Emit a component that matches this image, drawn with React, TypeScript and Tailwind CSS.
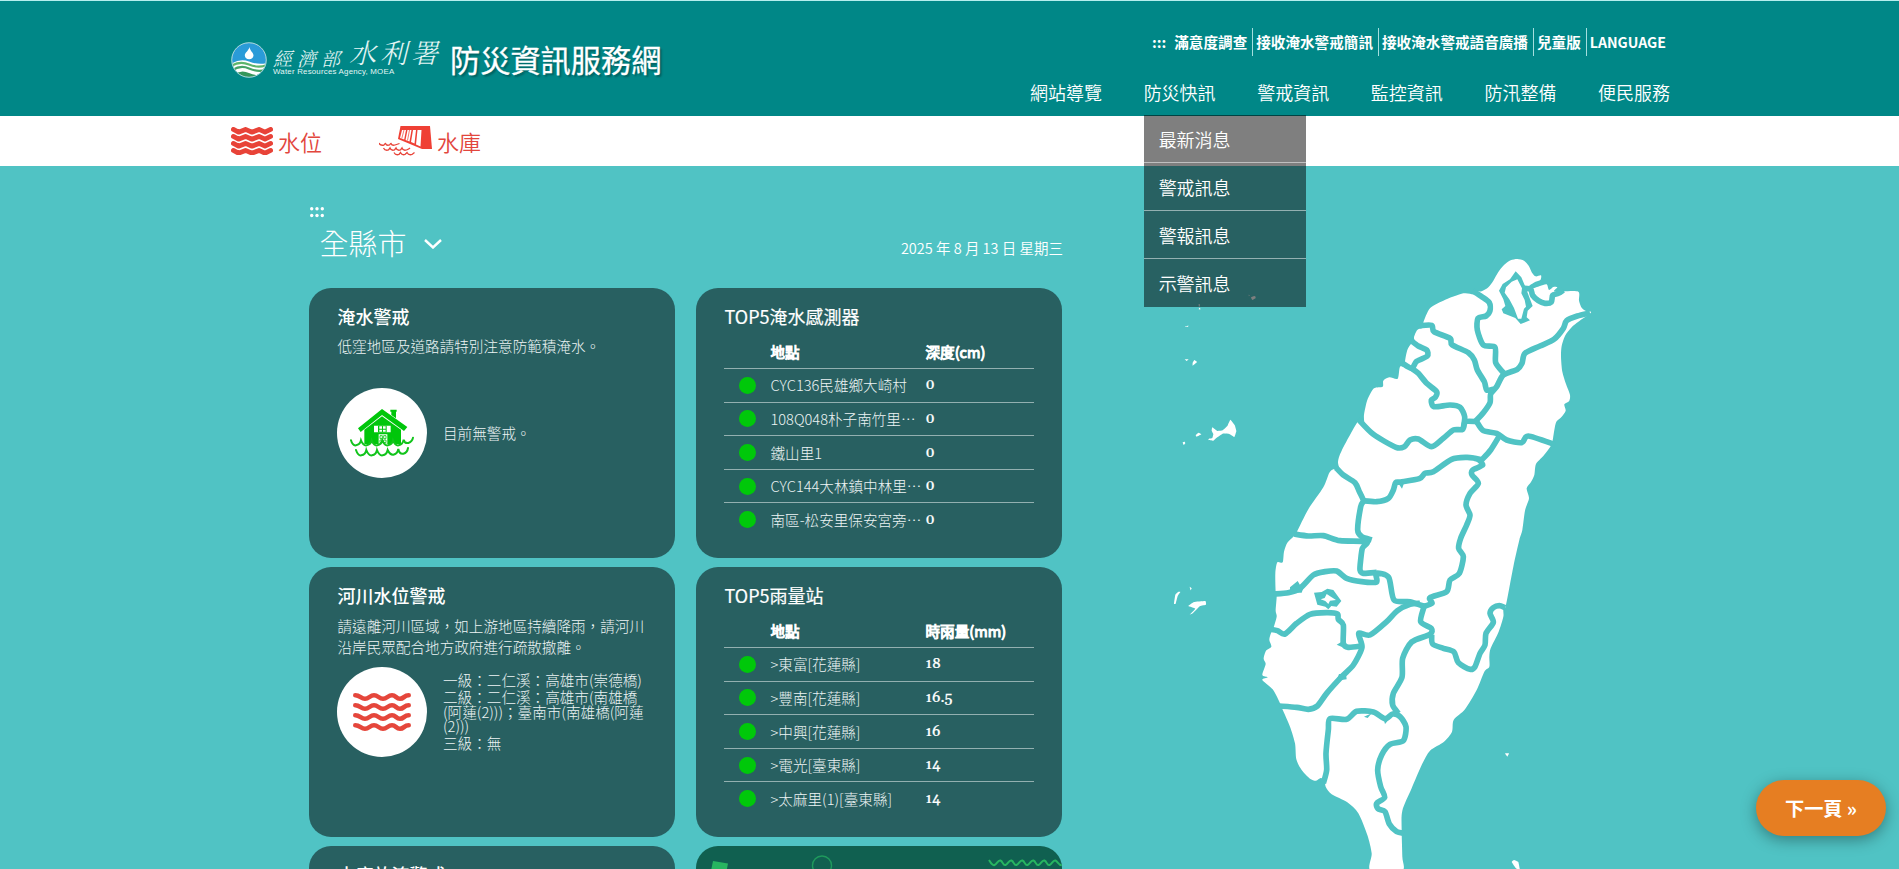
import React from 'react';

type Pt = [number, number];

const parse = (s: string): Pt[] => s.trim().split(/\s+/).map((p) => p.split(',').map(Number) as Pt);

/** Catmull-Rom spline through the given "x,y" points. */
function spline(src: string, closed = false, tension = 0.13): string {
  const p = parse(src);
  const n = p.length;
  const at = (i: number) => (closed ? p[(i + n) % n] : p[Math.max(0, Math.min(n - 1, i))]);
  let d = `M${p[0][0]},${p[0][1]}`;
  const last = closed ? n : n - 1;
  for (let i = 0; i < last; i++) {
    const [a, b, c, e] = [at(i - 1), at(i), at(i + 1), at(i + 2)];
    d += `C${b[0] + (c[0] - a[0]) * tension},${b[1] + (c[1] - a[1]) * tension} ${c[0] - (e[0] - b[0]) * tension},${c[1] - (e[1] - b[1]) * tension} ${c[0]},${c[1]}`;
  }
  return closed ? d + 'Z' : d;
}

const ISLAND =
  '735,155 755,154 775,142 790,122 805,96 822,75 842,61 862,57 882,62 896,77 906,98 917,109 933,106 931,120 915,126 895,140 905,146 930,138 950,133 957,150 970,141 982,142 972,154 1000,154 1045,155 1047,182 1055,203 1068,213 1083,215 1078,222 1055,238 1025,262 1005,288 995,318 993,350 997,395 1008,432 1020,465 1017,484 1003,493 1007,512 995,530 979,545 973,570 967,607 960,622 940,648 918,672 913,705 903,726 890,745 897,775 885,812 877,870 868,900 850,980 828,1095 820,1110 820,1130 806,1175 782,1225 778,1250 778,1280 763,1295 740,1350 705,1408 671,1440 666,1475 642,1505 600,1532 575,1575 545,1645 517,1712 515,1770 517,1850 516,1892 422,1892 425,1840 412,1785 385,1720 352,1687 305,1663 287,1640 284,1620 272,1614 258,1622 240,1616 215,1590 199,1558 195,1510 180,1460 157,1407 148,1385 128,1348 97,1320 113,1312 97,1305 107,1272 101,1256 108,1232 124,1220 118,1200 122,1182 130,1165 140,1130 137,1112 140,1070 137,1055 136,1000 142,967 158,967 162,935 172,908 190,890 200,877 235,808 280,742 298,698 312,687 328,688 324,665 335,632 385,543 402,552 402,525 412,480 432,445 458,440 460,422 478,412 503,416 510,380 527,382 525,365 532,330 543,312 555,308 552,292 562,270 582,262 580,248 600,205 640,182 700,160 730,163';

const BORDERS = [
  '728,153 755,170 778,188 780,212 768,228 744,235 742,270 760,315 795,322 797,368 820,398',
  '1080,219 1042,228 1010,242 1000,265 972,298 930,318 885,340 876,370 862,388 820,405 800,440 782,462 780,488 760,518 735,545',
  '570,257 605,256 612,275 660,295 666,314 715,338 733,360 742,390 763,425 770,450 790,448',
  '545,303 565,318 590,330 592,348 560,364 545,385 518,370',
  '545,385 565,400 590,430 620,455 616,472 604,480 612,500 660,495 690,502 704,530 700,565',
  '385,538 430,583 498,622 523,620 540,600 565,597 605,620 640,595 670,570 698,568 706,545 740,545',
  '740,545 760,572 800,580 830,600 875,608 895,588 975,614',
  '808,588 782,630 755,660',
  '758,660 735,655 710,652 665,658 610,695 585,700 568,716 512,726 497,728 490,750 475,775 440,785 395,782',
  '318,683 340,705 375,728 388,755 400,782 392,800 383,870 395,890 425,900',
  '192,882 235,888 280,887 330,902 410,905 397,925 392,960 390,990 400,1000 440,997',
  '745,658 758,675 728,690 726,705 745,730 720,760 708,795 720,825 710,855 692,895 686,925 700,950 688,1000 660,1020 650,1055 600,1073 606,1090 578,1100',
  '130,1062 175,1058 210,1045 250,1005 285,995 320,993 350,1015 395,1025 440,1026 438,1000 476,1012 492,1080 540,1085 585,1100',
  '122,1168 142,1172 165,1182 200,1150 240,1123 290,1118 322,1122 325,1138 340,1155 340,1210 355,1222 395,1218',
  '570,1090 540,1093 502,1112 470,1145 420,1185 386,1180 396,1222 370,1275 335,1310 290,1360 262,1398 235,1408 200,1402 148,1398',
  '582,1100 572,1145 604,1165 600,1183 545,1206 518,1255 516,1312 490,1360 488,1395 505,1420',
  '605,1185 608,1212 640,1225 672,1236 685,1268 720,1288 735,1280 750,1240 765,1215 768,1180 790,1147 780,1120 790,1103 808,1097 826,1103',
  '280,1630 290,1590 288,1540 295,1470 300,1436 350,1438 380,1414 430,1416 465,1436 488,1422 510,1430 528,1460 520,1502 480,1513 455,1545 443,1590 452,1640 464,1672 440,1690 444,1706 465,1715 478,1752 500,1775 522,1780',
  '880,145 902,148 908,166 925,182 945,190 964,186 968,166 985,160 1000,150',
];

const ISLETS = [
  '-92,203 -90,205 -88,208 -94,208',
  '-135,259 -124,257 -128,261',
  '-136,358 -124,358 -130,363',
  '-112,368 -107,360 -99,366 -112,377',
  '-53,562 -38,573 -22,571 -8,558 1,539 14,555 19,573 13,591 -2,582 -22,581 -40,593 -50,602 -65,600 -63,596 -53,594 -50,582 -55,572',
  '-103,585 -94,578 -86,583 -100,590',
  '-142,607 -136,605 -134,610 -139,615',
  '-168,1091 -164,1064 -156,1056 -149,1056 -157,1068 -163,1091',
  '-121,1040 -115,1045 -118,1051',
  '-125,1098 -108,1086 -74,1083 -72,1094 -90,1098 -112,1120 -121,1124 -104,1106',
  '56,164 59,166 57,169',
  '63,172 75,168 77,174 67,180',
  '-94,192 -90,194 -93,202',
  '825,1540 837,1540 832,1550',
  '845,1866 852,1860 865,1866 870,1892 858,1885',
];

function TaiwanMap() {
  return (
    <svg className="h-[629px] w-[460px] shrink-0" viewBox="-240 0 1380 1887" fill="none">
      <path d={spline(ISLAND, true)} fill="#fff" />
      <g stroke="#50c3c4" strokeWidth="17" strokeLinejoin="round">
        {BORDERS.map((b) => (
          <path key={b} d={spline(b)} />
        ))}
      </g>
      <path
        fill="#50c3c4"
        fillRule="evenodd"
        d="M857,94 L874,112 L886,140 L908,198 L893,212 L890,232 L900,241 L872,252 L856,234 L820,220 L815,208 L826,198 L820,178 L807,152 L818,132 L840,118Z M862,118 L845,125 L828,142 L824,158 L838,178 L852,204 L864,236 L874,236 L882,206 L888,200 L884,180 L874,160 L876,145Z"
      />
      <path
        fill="#50c3c4"
        fillRule="evenodd"
        d="M252,1058 L275,1056 L292,1046 L310,1050 L334,1083 L320,1100 L304,1098 L295,1108 L286,1100 L262,1094Z M290,1062 L284,1074 L272,1078 L286,1083 L295,1092 L300,1082 L318,1080 L305,1072Z"
      />
      <path fill="#50c3c4" d="M180,1042L203,1023L210,1035L225,1030L215,1058L180,1058ZM320,1214L335,1205L345,1225ZM504,728L516,746L522,730ZM402,1430L413,1434L425,1420ZM327,1302L348,1302L350,1318L320,1322ZM460,1435L465,1452L480,1435Z" />
      {ISLETS.map((s) => (
        <path key={s} d={spline(s, true, 0.05)} fill="#fff" />
      ))}
    </svg>
  );
}

function AgencyEmblem() {
  return (
    <svg className="h-9 w-9" viewBox="0 0 36 36">
      <defs>
        <clipPath id="disc">
          <circle cx="18" cy="18" r="17" />
        </clipPath>
      </defs>
      <circle cx="18" cy="18" r="17" fill="#fff" />
      <g clipPath="url(#disc)">
        <path d="M0 0H36V21Q27 23 18 19.500T0 22Z" fill="#2a9bd8" />
        <path d="M0 24Q9 18.500 18 22.500T36 23" fill="none" stroke="#5db56c" strokeWidth="2.200" />
        <path d="M0 29Q9 22.500 18 26.500T36 27.500" fill="none" stroke="#46a367" strokeWidth="2.200" />
        <path d="M2 33Q10 27 18 31T36 31.500V37H2Z" fill="#35965b" />
      </g>
      <circle cx="18" cy="18" r="17.300" fill="none" stroke="#a5d5dc" strokeWidth="1" />
      <path d="M18.500 5C19 9 22.500 10.500 22.500 13.500A4.400 4.400 0 0 1 13.800 13.500C13.800 10.500 17.500 9 18.500 5Z" fill="#fff" />
    </svg>
  );
}

function BarWaves() {
  const rows = [3, 10, 17, 24];
  return (
    <svg className="h-7 w-[42px]" viewBox="0 0 42 28" fill="none" stroke="#e84338" strokeWidth="4.800" strokeLinecap="round" strokeLinejoin="round">
      {rows.map((y) => (
        <path key={y} d={`M2.400 ${y - 0.6}L7.500 ${y + 2.2}L14.500 ${y - 0.6}L21 ${y + 2.2}L28 ${y - 0.6}L34 ${y + 2.2}L39.600 ${y - 0.6}`} />
      ))}
    </svg>
  );
}

function DamIcon() {
  return (
    <svg className="h-[30px] w-[53px]" viewBox="0 0 53 30" fill="none">
      <path d="M21.500 0H51L53 23H43L19 13Z" fill="#ef4035" />
      <path d="M23 4H27L25.200 13.500L21 12ZM28.500 4H32.500L30.500 15.500L26.500 14ZM34 4H37L35.500 17.500L32 16ZM38.500 4H42.500L41.500 20.500L37 18.500Z" fill="#fff" />
      <path d="M25 4L22.800 12.500M30.500 4L28.500 14.500" stroke="#ef4035" strokeWidth="0.700" />
      <g stroke="#e84338" strokeWidth="1.300">
        <path d="M0 17Q1 20 5 19Q6 17.500 6.500 17.500Q7.500 20 10.500 19Q11.500 17.500 12 17.500Q13 20 16 19Q19 18 20.500 17.500" />
        <path d="M4.500 22Q6 25 9.500 24L11 22Q12 25 15.500 24L17 22Q18 25 21.500 24L23 22Q24 25 27.500 24Q30 23 31 22" />
        <path d="M15 26.500Q16.500 29.500 20 28.500L21.500 26.500Q23 29.500 26 28.500L28 26.500Q29.500 29.500 33 28.500L35.500 26.500" />
      </g>
    </svg>
  );
}

function HouseIcon() {
  return (
    <svg className="h-[48px] w-[64px]" viewBox="0 0 192 144" fill="none">
      <path d="M96 0L172 54L162 66L96 18L32 69L24 58Z" fill="#00c60b" />
      <path d="M121 2H140V8H138V28L124 18V8H121Z" fill="#00c60b" />
      <path d="M96 22L153 62V105H43V62Z" fill="#00c60b" />
      <path d="M72 50H122V70H72ZM86 76H112V104H86Z" fill="#fff" />
      <path d="M84 50H110V70H84Z" fill="#00c60b" />
      <path d="M88 52H96V59H88ZM99 52H107V59H99ZM88 62H96V68H88ZM99 62H107V68H99Z" fill="#fff" />
      <path d="M90 80H97V89H90ZM101 80H108V89H101ZM90 93H97V101H90ZM101 93H108V101H101Z" stroke="#00c60b" strokeWidth="2.500" />
      <path d="M2 112Q8 112 18 110Q30 108 33 98Q40 112 50 110Q62 108 65 98Q72 112 82 110Q94 108 97 98Q104 112 114 110Q126 108 129 98Q136 112 146 110Q158 108 161 98Q164 106 175 103V116H2Z" fill="#fff" />
      <g stroke="#12c41c" strokeWidth="6" strokeLinecap="round">
        <path d="M3 94Q8 111 18 109Q30 107 33 94Q40 111 50 109Q62 107 65 94Q72 111 82 109Q94 107 97 94Q104 111 114 109Q126 107 129 94Q136 111 146 109Q158 107 161 92Q164 104 175 102Q187 98 189 86" />
        <path d="M18 123Q24 141 34 139Q46 137 49 123Q56 141 66 139Q78 137 81 123Q88 141 98 139Q110 137 113 123Q120 138 130 137Q142 135 145 120Q148 136 160 134Q172 131 174 117" />
      </g>
    </svg>
  );
}

function CardWaves() {
  return (
    <svg className="h-10 w-[58px]" viewBox="0 0 58 40" fill="none" stroke="#e5463b" strokeWidth="4.600" strokeLinecap="round">
      {[3.2, 13.2, 23.2, 33.2].map((y) => (
        <path key={y} d={`M2.300 ${y}C7 ${y} 8 ${y + 3.6} 12 ${y + 3.6}S17 ${y} 21 ${y}S26 ${y + 3.6} 30 ${y + 3.6}S35 ${y} 39 ${y}S43 ${y + 3.6} 47 ${y + 3.6}S51 ${y} 55.700 ${y}`} />
      ))}
    </svg>
  );
}

const CARD = 'h-[270px] w-[366px] rounded-[22px] bg-[#286061] px-7 pt-[15px]';
const TITLE = 'pl-[0.500px] text-[18px] leading-[26px] font-medium';

function TopCard({ title, unit, rows }: { title: string; unit: string; rows: [string, string][] }) {
  return (
    <section className={CARD}>
      <h2 className="pl-[0.500px] text-[18px] leading-[26px] font-normal [-webkit-text-stroke:0.2px_white]">{title}</h2>
      <div className="mt-2 flex h-[31px] items-center pb-0.5 pl-[46.500px] text-[14.600px] font-normal [-webkit-text-stroke:1px_white]">
        <span className="w-[155px]">地點</span>
        <span>{unit}</span>
      </div>
      {rows.map(([name, value], i) => (
        <div key={i} className="flex h-[33.600px] items-center border-t border-[#93b0b0] pl-[15px] text-[14.600px]">
          <span className="mr-[14.500px] size-[17px] rounded-full bg-[#00c80a]" />
          <span className="w-[155px] font-light whitespace-nowrap text-[#edf4f4]">{name}</span>
          <span className="font-[Gelasio,Georgia,serif] text-[14.600px] font-medium [-webkit-text-stroke:0.2px_white]">{value}</span>
        </div>
      ))}
    </section>
  );
}

const LINKS = ['滿意度調查', '接收淹水警戒簡訊', '接收淹水警戒語音廣播', '兒童版', 'LANGUAGE'];
const NAV = ['網站導覽', '防災快訊', '警戒資訊', '監控資訊', '防汛整備', '便民服務'];
const MENU = ['最新消息', '警戒訊息', '警報訊息', '示警訊息'];

export default function App() {
  return (
    <div
      lang="zh-Hant"
      className="relative flex h-[869px] w-[1899px] flex-col overflow-hidden bg-[#50c3c4] font-['Noto_Sans_CJK_TC','Noto_Sans_CJK_SC',sans-serif] text-white"
    >
      <header className="flex h-[116px] shrink-0 justify-between border-t border-[#b5eeee] bg-[#008787] pr-[229px] pl-[231px]">
        <div className="flex pt-[37px]">
          <div className="mt-1">
            <AgencyEmblem />
          </div>
          <div className="ml-1.5 w-[177px] text-[#e4f6f5]">
            <div className="flex h-[29px] items-end gap-[4px] font-['Noto_Serif_CJK_TC','Noto_Sans_CJK_TC',serif] leading-none font-[350] italic">
              <span className="text-[19px] tracking-[5px]">經濟部</span>
              <span className="-translate-y-0.5 text-[27px] tracking-[4px]">水利署</span>
            </div>
            <div className="font-['Liberation_Sans',sans-serif] text-[7.900px] leading-[10px] tracking-[0.200px] whitespace-nowrap">Water Resources Agency, MOEA</div>
          </div>
          <h1 className="text-[30.200px] leading-[43px] font-normal whitespace-nowrap [-webkit-text-stroke:0.3px_white] [text-shadow:2px_2px_2px_rgba(0,0,0,0.3)]">防災資訊服務網</h1>
        </div>
        <div className="flex flex-col items-end">
          <div className="mt-[27px] mr-1 flex h-7 items-center text-[14.600px] leading-7 font-bold whitespace-nowrap">
            <span className="mr-2">:::</span>
            {LINKS.map((t, i) => (
              <span
                key={t}
                className={
                  i === 0
                    ? 'pr-[5px]'
                    : 'border-l border-[#a5dede] pr-[5px] pl-[3px] last:pr-0 last:text-[14.200px]'
                }
              >
                {t}
              </span>
            ))}
          </div>
          <nav className="mt-[23px] flex gap-[41.600px] text-[18px] leading-[26px] font-[350]">
            {NAV.map((t) => (
              <div key={t} className="relative w-[72px] whitespace-nowrap">
                {t}
                {t === '防災快訊' && (
                  <div className="absolute top-[36px] left-0 z-10 h-48 w-[162px] bg-black/50">
                    {MENU.map((m) => (
                      <div key={m} className="h-12 border-b border-white/50 pt-[11px] pl-[15px] last:border-b-0">
                        {m}
                      </div>
                    ))}
                  </div>
                )}
              </div>
            ))}
          </nav>
        </div>
      </header>

      <div className="flex h-[50px] shrink-0 items-center bg-white pl-[231px] text-[22px] font-[350] text-[#e2463d]">
        <BarWaves />
        <span className="ml-[5px] w-[101px]">水位</span>
        <DamIcon />
        <span className="ml-[5px]">水庫</span>
      </div>

      <main className="flex pl-[309px]">
        <div className="w-[753px] pt-[34px]">
          <svg className="ml-px h-6 w-4" viewBox="0 0 16 24" fill="#fff">
            {[1.7, 7, 12.3].map((x) => (
              <g key={x}>
                <circle cx={x} cy="8.700" r="1.700" />
                <circle cx={x} cy="15.500" r="1.700" />
              </g>
            ))}
          </svg>
          <div className="flex h-16 justify-between">
            <div className="-mt-0.5 flex h-10 items-center pl-[10.500px] text-[29px] leading-10 font-light">
              全縣市
              <svg className="mt-1 ml-[17px] h-2.5 w-[18px]" viewBox="0 0 18 10" fill="none" stroke="#fff" strokeWidth="2.400">
                <path d="M1 1L9 8.500L17 1" />
              </svg>
            </div>
            <div className="-mr-px pt-[14px] text-[14.500px] leading-5 font-[350]">2025 年 8 月 13 日 星期三</div>
          </div>
          <div className="grid grid-cols-[366px_366px] gap-x-[21px] gap-y-[9px]">
            <section className={CARD}>
              <h2 className={TITLE}>淹水警戒</h2>
              <p className="mt-1.5 pl-[0.500px] text-[14.600px] leading-[21px] font-light text-[#edf4f4]">低窪地區及道路請特別注意防範積淹水。</p>
              <div className="mt-8 flex items-center">
                <div className="flex size-[90px] items-center justify-center rounded-full bg-white">
                  <HouseIcon />
                </div>
                <p className="ml-4 text-[14.600px] font-light text-[#edf4f4]">目前無警戒。</p>
              </div>
            </section>
            <TopCard
              title="TOP5淹水感測器"
              unit="深度(cm)"
              rows={[
                ['CYC136民雄鄉大崎村', '0'],
                ['108Q048朴子南竹里⋯', '0'],
                ['鐵山里1', '0'],
                ['CYC144大林鎮中林里⋯', '0'],
                ['南區-松安里保安宮旁⋯', '0'],
              ]}
            />
            <section className={CARD}>
              <h2 className={TITLE}>河川水位警戒</h2>
              <p className="mt-[7px] w-[312px] pl-[0.500px] text-[14.600px] leading-[21px] font-light whitespace-nowrap text-[#edf4f4]">
                請遠離河川區域，如上游地區持續降雨，請河川
                <br />
                沿岸民眾配合地方政府進行疏散撤離。
              </p>
              <div className="mt-2.5 flex items-center">
                <div className="flex size-[90px] shrink-0 items-center justify-center rounded-full bg-white">
                  <CardWaves />
                </div>
                <div className="ml-4 flex flex-col gap-[2.400px] text-[14.600px] leading-[14.600px] font-light whitespace-nowrap text-[#edf4f4]">
                  <p>一級：二仁溪：高雄市(崇德橋)</p>
                  <p>
                    二級：二仁溪：高雄市(南雄橋
                    <br />
                    (阿蓮(2)))；臺南市(南雄橋(阿蓮
                    <br />
                    (2)))
                  </p>
                  <p>三級：無</p>
                </div>
              </div>
            </section>
            <TopCard
              title="TOP5雨量站"
              unit="時雨量(mm)"
              rows={[
                ['>東富[花蓮縣]', '18'],
                ['>豐南[花蓮縣]', '16.5'],
                ['>中興[花蓮縣]', '16'],
                ['>電光[臺東縣]', '14'],
                ['>太麻里(1)[臺東縣]', '14'],
              ]}
            />
            <section className={CARD}>
              <h2 className={TITLE}>水庫放流警戒</h2>
            </section>
            <section className="h-[270px] w-[366px] overflow-hidden rounded-[22px] bg-[#106050]">
              <svg className="h-[100px] w-[366px]" viewBox="0 0 366 100" fill="none">
                <path d="M17 15L32 17.500L29 33L14 30Z" fill="#27b560" />
                <circle cx="126" cy="19.500" r="9.500" stroke="#1f9a5c" strokeWidth="1.400" />
                <path d="M293 14C295 17 296 20 298.500 19S302 13.500 304.500 14.500S307 20 309.500 19S313 13.500 315.500 14.500S318 20 320.500 19S324 13.500 326.500 14.500S329 20 331.500 19S335 13.500 337.500 14.500S340 20 342.500 19S346 13.500 348.500 14.500S351 20 353.500 19S357 13.500 359.500 14.500S363 20 366 19" stroke="#27b560" strokeWidth="2" />
              </svg>
            </section>
          </div>
        </div>
        <div className="mt-[74px] ml-[88px]">
          <TaiwanMap />
        </div>
      </main>

      <button className="absolute right-[13px] bottom-[33px] flex h-14 w-[130px] items-center justify-center rounded-full bg-[#e67e22] text-[19.200px] font-bold shadow-[0_4px_15px_rgba(0,0,0,0.35)]">
        下一頁 »
      </button>
    </div>
  );
}
